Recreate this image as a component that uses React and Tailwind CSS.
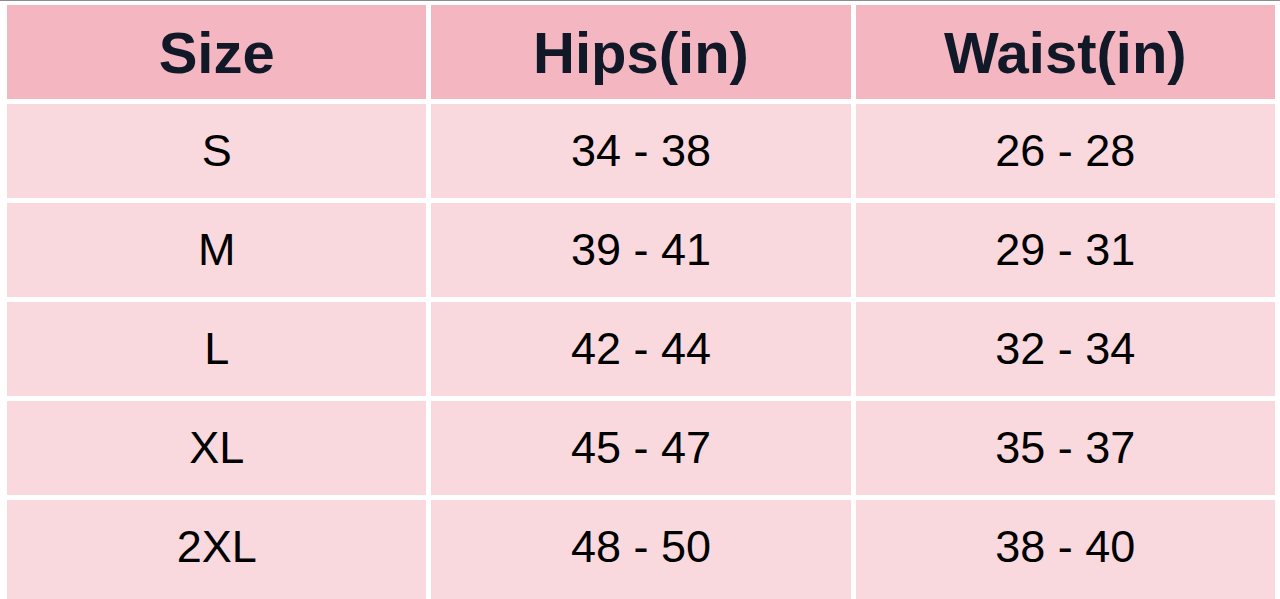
import React from 'react';

const rows = [
  { size: 'S', hips: '34 - 38', waist: '26 - 28' },
  { size: 'M', hips: '39 - 41', waist: '29 - 31' },
  { size: 'L', hips: '42 - 44', waist: '32 - 34' },
  { size: 'XL', hips: '45 - 47', waist: '35 - 37' },
  { size: '2XL', hips: '48 - 50', waist: '38 - 40' },
];

const headers = ['Size', 'Hips(in)', 'Waist(in)'];

const App = () => {
  return (
    <div
      className="bg-white border-t border-[#8c8c8c] pt-[4px] pl-[7px] pr-[5px] h-[599px] overflow-hidden"
      style={{ fontFamily: '"Liberation Sans", Arial, sans-serif' }}
    >
      <div className="grid grid-cols-3 gap-[5px]">
        {headers.map((h) => (
          <div
            key={h}
            className="h-[94px] bg-[#f4b6c0] flex items-center justify-center text-[58px] font-bold text-[#111827]"
          >
            {h}
          </div>
        ))}
        {rows.map((r, i) => {
          const last = i === rows.length - 1;
          const cell = last
            ? 'h-[110px] pb-[16px] bg-[#f9d9de] flex items-center justify-center text-[45px] text-black'
            : 'h-[94px] bg-[#f9d9de] flex items-center justify-center text-[45px] text-black';
          return (
            <React.Fragment key={r.size}>
              <div className={cell}>{r.size}</div>
              <div className={cell}>{r.hips}</div>
              <div className={cell}>{r.waist}</div>
            </React.Fragment>
          );
        })}
      </div>
    </div>
  );
};

export default App;
